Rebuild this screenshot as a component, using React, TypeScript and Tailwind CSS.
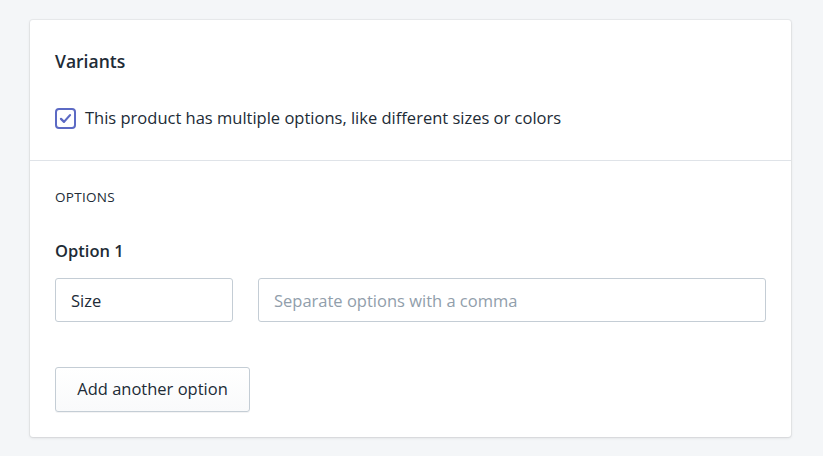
export default function App() {
  return (
    <div
      className="min-h-screen w-[823px] h-[456px] bg-[#f4f6f8] pt-[20px] pl-[30px] text-[#212b36]"
      style={{ fontFamily: '"Open Sans", "Noto Sans", sans-serif' }}
    >
      <div className="w-[761px] rounded-[3px] bg-white shadow-[0_0_0_1px_rgba(63,63,68,0.05),0_1px_3px_0_rgba(63,63,68,0.15)]">
        {/* Variants header */}
        <div className="px-[25px] pt-[27px] pb-[31px]">
          <h2 className="text-[17.5px] font-semibold leading-[28px]">Variants</h2>
          <label className="mt-[32px] flex items-center gap-[9px]">
            <span className="flex size-[21px] items-center justify-center rounded-[4px] border-2 border-[#5c6ac4] bg-white">
              <svg viewBox="0 0 20 20" className="size-[15px]" fill="none">
                <path d="M4 10.5l4 4 8-9" stroke="#5c6ac4" strokeWidth="3" strokeLinecap="round" strokeLinejoin="round" />
              </svg>
            </span>
            <span className="text-[16.5px] leading-[22px]">
              This product has multiple options, like different sizes or colors
            </span>
          </label>
        </div>

        <div className="border-t border-[#dfe3e8] px-[25px] pt-[26px] pb-[25px]">
          <h3 className="text-[13.5px] font-medium uppercase leading-[20px] tracking-[0.3px]">Options</h3>

          <div className="mt-[32px] text-[16.5px] font-semibold leading-[24px]">Option 1</div>
          <div className="mt-[15px] flex gap-[25px]">
            <input
              defaultValue="Size"
              className="h-[44px] w-[178px] rounded-[3px] border border-[#c4cdd5] bg-white px-[15px] text-[16.5px] text-[#212b36] outline-none"
            />
            <input
              placeholder="Separate options with a comma"
              className="h-[44px] flex-1 rounded-[3px] border border-[#c4cdd5] bg-white px-[15px] text-[16.5px] text-[#212b36] outline-none placeholder:text-[#919eab]"
            />
          </div>

          <button className="mt-[45px] h-[45px] w-[195px] rounded-[3px] border border-[#c4cdd5] bg-gradient-to-b from-white to-[#f9fafb] text-[16.5px] text-[#212b36] shadow-[0_1px_0_0_rgba(22,29,37,0.05)]">
            Add another option
          </button>
        </div>
      </div>
    </div>
  );
}
